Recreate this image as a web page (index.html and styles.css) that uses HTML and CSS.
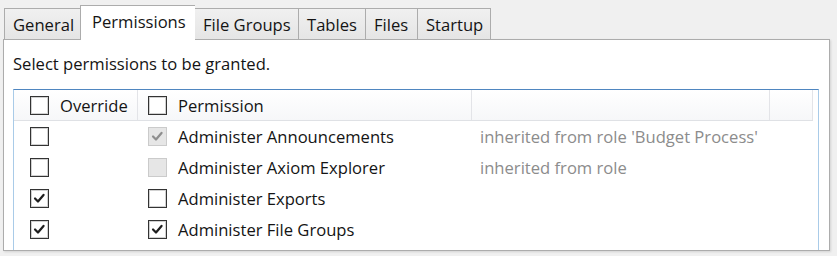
FILE: index.html
```html
<!DOCTYPE html>
<html>
<head>
<meta charset="utf-8">
<link rel="stylesheet" href="styles.css">
</head>
<body>
<div class="window">
  <div class="tabs">
    <div class="tab first">General</div>
    <div class="tab selected">Permissions</div>
    <div class="tab">File Groups</div>
    <div class="tab">Tables</div>
    <div class="tab">Files</div>
    <div class="tab last">Startup</div>
  </div>
  <div class="panel">
    <div class="intro">Select permissions to be granted.</div>
    <div class="list">
      <div class="row header">
        <div class="cell c1"><span class="cb"></span><span class="label">Override</span></div>
        <div class="cell c2"><span class="cb"></span><span class="label">Permission</span></div>
        <div class="cell c3"></div>
        <div class="cell c4"></div>
      </div>
      <div class="row">
        <div class="cell c1"><span class="cb"></span></div>
        <div class="cell c2"><span class="cb disabled"><svg viewBox="0 0 19 19"><path d="M4.5 9.5 L7.8 12.8 L14 5.5"/></svg></span><span class="label">Administer Announcements</span></div>
        <div class="cell c3"><span class="inh">inherited from role 'Budget Process'</span></div>
        <div class="cell c4"></div>
      </div>
      <div class="row">
        <div class="cell c1"><span class="cb"></span></div>
        <div class="cell c2"><span class="cb disabled"></span><span class="label">Administer Axiom Explorer</span></div>
        <div class="cell c3"><span class="inh">inherited from role</span></div>
        <div class="cell c4"></div>
      </div>
      <div class="row">
        <div class="cell c1"><span class="cb"><svg viewBox="0 0 19 19"><path d="M4.5 9.5 L7.8 12.8 L14 5.5"/></svg></span></div>
        <div class="cell c2"><span class="cb"></span><span class="label">Administer Exports</span></div>
        <div class="cell c3"></div>
        <div class="cell c4"></div>
      </div>
      <div class="row">
        <div class="cell c1"><span class="cb"><svg viewBox="0 0 19 19"><path d="M4.5 9.5 L7.8 12.8 L14 5.5"/></svg></span></div>
        <div class="cell c2"><span class="cb"><svg viewBox="0 0 19 19"><path d="M4.5 9.5 L7.8 12.8 L14 5.5"/></svg></span><span class="label">Administer File Groups</span></div>
        <div class="cell c3"></div>
        <div class="cell c4"></div>
      </div>
    </div>
  </div>
</div>
</body>
</html>
```
FILE: styles.css
```css
* { box-sizing: border-box; }
html, body { margin: 0; padding: 0; }
body {
  background: #f0f0f0;
  font-family: "Open Sans", "Noto Sans", sans-serif;
  font-size: 16.6px;
  color: #141414;
  width: 837px;
  height: 256px;
  overflow: hidden;
}
.window {
  padding-left: 3px;
}
.tabs {
  display: flex;
  align-items: flex-end;
  height: 40px;
  padding-left: 1px;
  position: relative;
  z-index: 2;
}
.tab {
  height: 31px;
  margin-bottom: 1px;
  border: 1px solid #acacac;
  border-right: none;
  border-bottom: none;
  background: linear-gradient(#f0f0f0, #e5e5e5);
  display: flex;
  align-items: center;
  padding: 0 0 0 8px;
  white-space: nowrap;
}
.tab.first { width: 76px; }
.tab.selected {
  width: 115px;
  height: 35px;
  margin-bottom: 0;
  background: #fff;
  padding: 0 0 3px 11px;
}
.tab:nth-child(3) { width: 103px; }
.tab:nth-child(4) { width: 67px; }
.tab:nth-child(5) { width: 52px; }
.tab.last { width: 74px; border-right: 1px solid #acacac; }
.selected + .tab { border-left: none; }
.panel {
  width: 827px;
  height: 212px;
  margin-top: -1px;
  border: 1px solid #acacac;
  background: #fff;
  padding: 8px 0 0 9px;
  overflow: hidden;
  box-shadow: 1px 1px 2px rgba(0,0,0,0.12);
}
.intro {
  height: 41px;
  line-height: 32px;
}
.list {
  width: 806px;
  height: 200px;
  border: 1px solid #a9cbe8;
  border-top-color: #4f86c0;
  padding: 0 5px 0 0;
}
.row {
  display: flex;
  height: 31px;
  align-items: center;
}
.row.header {
  height: 31px;
  background: linear-gradient(#ffffff, #f6f7f9);
  border-bottom: 1px solid #dfe1e5;
}
.cell {
  display: flex;
  align-items: center;
  height: 100%;
  white-space: nowrap;
}
.c1 { width: 124px; padding-left: 16px; }
.c2 { width: 334px; padding-left: 10px; }
.c3 { width: 298px; padding-left: 8px; }
.c4 { width: 43px; }
.header .cell { border-right: 1px solid #e3e4e8; }
.label { margin-left: 11px; }
.inh { color: #8c8c8c; }
.cb {
  width: 19px;
  height: 19px;
  border: 1px solid #333;
  box-shadow: inset 0 0 0 1px rgba(0,0,0,0.18);
  background: #fff;
  display: inline-flex;
  flex: none;
}
.cb svg { width: 17px; height: 17px; }
.cb path {
  fill: none;
  stroke: #1e1e1e;
  stroke-width: 2.5;
  stroke-linecap: round;
  stroke-linejoin: round;
}
.cb.disabled {
  background: #e6e6e6;
  border-color: #cbcbcb;
  box-shadow: none;
}
.cb.disabled path { stroke: #8e8e8e; }
```
